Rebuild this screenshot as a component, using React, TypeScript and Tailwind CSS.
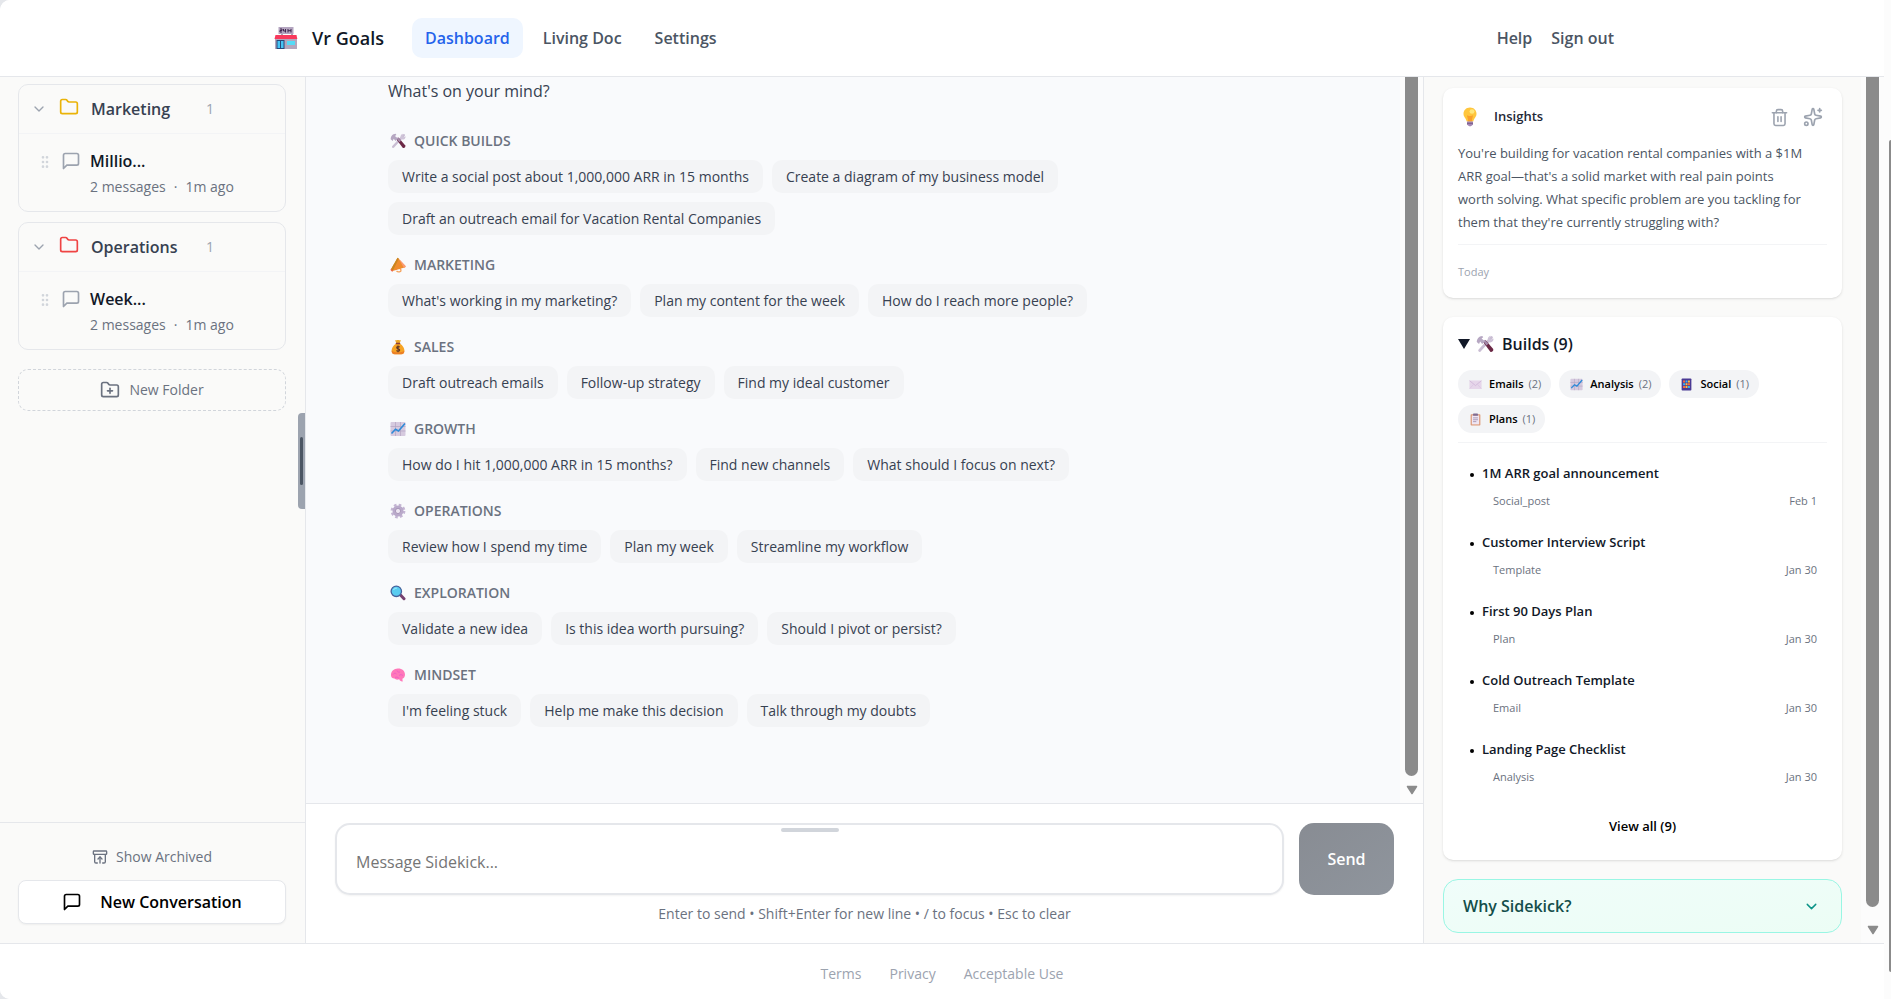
import { useState, type ReactNode } from "react";
import {
  ArchiveRestore,
  ChevronDown,
  Folder,
  FolderPlus,
  GripVertical,
  Sparkles,
  Trash2,
} from "lucide-react";

const NAV = ["Dashboard", "Living Doc", "Settings"];

const FOLDERS = [
  { name: "Marketing", color: "text-[#eab308]", chat: "Millio..." },
  { name: "Operations", color: "text-[#ef4444]", chat: "Week..." },
];

const PROMPTS = [
  {
    title: "Quick builds",
    icon: <ToolsIcon />,
    items: [
      "Write a social post about 1,000,000 ARR in 15 months",
      "Create a diagram of my business model",
      "Draft an outreach email for Vacation Rental Companies",
    ],
  },
  {
    title: "Marketing",
    icon: <MegaphoneIcon />,
    items: [
      "What's working in my marketing?",
      "Plan my content for the week",
      "How do I reach more people?",
    ],
  },
  {
    title: "Sales",
    icon: <MoneyBagIcon />,
    items: [
      "Draft outreach emails",
      "Follow-up strategy",
      "Find my ideal customer",
    ],
  },
  {
    title: "Growth",
    icon: <ChartIcon />,
    items: [
      "How do I hit 1,000,000 ARR in 15 months?",
      "Find new channels",
      "What should I focus on next?",
    ],
  },
  {
    title: "Operations",
    icon: <GearIcon />,
    items: [
      "Review how I spend my time",
      "Plan my week",
      "Streamline my workflow",
    ],
  },
  {
    title: "Exploration",
    icon: <MagnifierIcon />,
    items: [
      "Validate a new idea",
      "Is this idea worth pursuing?",
      "Should I pivot or persist?",
    ],
  },
  {
    title: "Mindset",
    icon: <BrainIcon />,
    items: [
      "I'm feeling stuck",
      "Help me make this decision",
      "Talk through my doubts",
    ],
  },
];

const FILTERS = [
  { label: "Emails", count: 2, icon: <EnvelopeIcon /> },
  { label: "Analysis", count: 2, icon: <ChartIcon /> },
  { label: "Social", count: 1, icon: <PhoneIcon /> },
  { label: "Plans", count: 1, icon: <ClipboardIcon /> },
];

const BUILDS = [
  { title: "1M ARR goal announcement", kind: "Social_post", date: "Feb 1" },
  { title: "Customer Interview Script", kind: "Template", date: "Jan 30" },
  { title: "First 90 Days Plan", kind: "Plan", date: "Jan 30" },
  { title: "Cold Outreach Template", kind: "Email", date: "Jan 30" },
  { title: "Landing Page Checklist", kind: "Analysis", date: "Jan 30" },
];

function Glyph({ children }: { children: ReactNode }) {
  return (
    <svg viewBox="0 0 16 16" className="size-full" aria-hidden="true">
      {children}
    </svg>
  );
}

function StoreIcon() {
  return (
    <svg viewBox="0 0 24 24" className="size-6 shrink-0" aria-hidden="true">
      <path d="M8 8v3M18 8v3" stroke="#5b4a66" strokeWidth="1" />
      <rect x="4.500" y="1" width="15" height="7" fill="#b4a5c0" />
      <path
        d="M6 3h2v1.500H6V6h2M9.500 3v2h2M11.500 3v3.500M14 3v3.500M17 3v3.500M14 4.700h3"
        fill="none"
        stroke="#43284f"
        strokeWidth="1"
      />
      <rect x="1" y="12" width="22" height="11" fill="#b3a6bd" />
      <path d="M1.500 9h21l.8 4H.5z" fill="#f8395c" />
      <rect x="2.500" y="14" width="8" height="9" fill="#29487a" />
      <path d="M3.500 15h2.500v7H3.500zM7 15h2.500v7H7z" fill="#45c4f5" />
      <rect x="13" y="15" width="8" height="4" fill="#55dbf7" />
    </svg>
  );
}

function ToolsIcon() {
  return (
    <Glyph>
      <path
        d="M13.800 2.200 3.200 13.800"
        stroke="#c9bdd3"
        strokeWidth="2.400"
        strokeLinecap="round"
      />
      <path
        d="M10.800 5.500c-1-2 .2-4.500 2.400-4.800L12 2.700l1.400 1.500 2.200-1c.3 2.300-2 4-4 3.200z"
        fill="#cfc3d8"
      />
      <path d="m6.500 6.500 2-2 6.800 8c.5 1.800-1 3-2.600 2.300z" fill="#6b2845" />
      <path d="M6.500 5.500 8 4.200l3 3.600-1.700 1.500z" fill="#a58cad" />
      <path
        d="M.7 6.200C.6 3.500 2.500 1 5.600.8l.8 1.200-1.500 1L8 5.500 5.500 8 3.700 5.700 2.700 8z"
        fill="#b6a7c2"
      />
    </Glyph>
  );
}

function MegaphoneIcon() {
  return (
    <Glyph>
      <path
        d="M6 12.500c1-2 4.500-2 5 .5.300 2-3 2.500-4.500 1"
        fill="none"
        stroke="#f5a35c"
        strokeWidth="1.300"
      />
      <path d="M7.500.8 15.500 9c.3 1.200-.8 1.800-1.700 1.700L2.600 14 1 12.300z" fill="#f08c2e" />
      <path d="M8.500 1.200 15.500 9c.3 1.200-.8 1.800-1.700 1.700z" fill="#fb9a74" />
      <path d="m7.500.8 1.400.8-6 12.200L1 12.300z" fill="#c9861f" />
      <path d="m1.200 12 1.900 2-1 .8-1.800-2z" fill="#ee5b3f" />
    </Glyph>
  );
}

function MoneyBagIcon() {
  return (
    <Glyph>
      <path d="M5 1c1 .8 1.800-.5 3 0 1.200-.5 2 .8 3 0l-1.300 3.300H6.300z" fill="#eda92a" />
      <path
        d="M6.300 4.500h3.400c3 1.800 5 5 4.600 8-.3 2-1.800 2.800-3.300 2.800H5c-1.500 0-3-.8-3.300-2.800-.4-3 1.600-6.200 4.600-8z"
        fill="#f6a323"
      />
      <path
        d="M1.700 11.500c2 2.500 10 2.800 12.600 0 .3 2.800-1.300 3.800-3.300 3.800H5c-2 0-3.600-1-3.300-3.800z"
        fill="#ec7f27"
      />
      <rect x="5.700" y="3.700" width="4.600" height="1.500" rx=".7" fill="#8d3d35" />
      <path
        d="M9.700 8.200C9 7.300 6.600 7.400 6.700 8.800c.1 1.300 3 .8 3 2.200 0 1.500-2.500 1.500-3.400.5M8 6.500v6.800"
        fill="none"
        stroke="#5d3426"
        strokeWidth="1.100"
      />
    </Glyph>
  );
}

function ChartIcon() {
  return (
    <Glyph>
      <rect x=".5" y="1" width="15" height="14" rx="1" fill="#d6cadf" />
      <path
        d="M5.500 1v14M10.500 1v14M.5 5.500h15M.5 10h15"
        stroke="#b3a4c1"
        strokeWidth=".7"
      />
      <path
        d="m1.500 12.500 4-4.200 3 1.700 6.500-7.500"
        fill="none"
        stroke="#2e8ad8"
        strokeWidth="1.600"
      />
    </Glyph>
  );
}

function GearIcon() {
  return (
    <Glyph>
      <circle
        cx="8"
        cy="8"
        r="6.200"
        fill="none"
        stroke="#c4b5d3"
        strokeWidth="2.400"
        strokeDasharray="2.600 2.270"
      />
      <circle cx="8" cy="8" r="4" fill="none" stroke="#b9a9ca" strokeWidth="3" />
      <circle cx="8" cy="8" r="2.600" fill="#ece4f1" stroke="#9985ab" strokeWidth=".8" />
    </Glyph>
  );
}

function MagnifierIcon() {
  return (
    <Glyph>
      <path
        d="m10.500 10 3.500 3.700"
        stroke="#75406f"
        strokeWidth="3"
        strokeLinecap="round"
      />
      <circle cx="6.300" cy="6.300" r="5.200" fill="#59ccf0" stroke="#45609b" strokeWidth="1.300" />
      <path d="M3.500 5c.6-1.400 2-2 3.300-1.800" fill="none" stroke="#a5ecff" strokeWidth="1" />
    </Glyph>
  );
}

function BrainIcon() {
  return (
    <Glyph>
      <path
        d="M1 8.500C.6 4.500 4 1.500 8 1.600c4.300 0 7.300 2.700 7 6.500-.1 2-1.300 3.200-2.600 3.700l.3 2.700c-1.700.3-2.900-.8-3.500-2.200-2 .8-3.600.5-4.800-.7C2.300 11.500 1.200 10.300 1 8.500z"
        fill="#ff78b9"
      />
      <path
        d="M3 7.500c1-1.500 2.500-1.500 3.500-.5M7 3.500c.3 1.500 1.500 2 3 1.500M9 8.500c1.500-1.300 3-1 4 .3M5 10.500c1.300-.8 2.800-.5 4 1"
        fill="none"
        stroke="#f05fc8"
        strokeWidth="1"
      />
    </Glyph>
  );
}

function EnvelopeIcon() {
  return (
    <Glyph>
      <rect x=".5" y="3" width="15" height="10.500" rx=".8" fill="#e6d6ea" />
      <path d="m.7 3.300 7.300 6 7.300-6" fill="none" stroke="#cfb5d8" strokeWidth="1" />
      <path d="m.7 13.200 5-5.500M15.300 13.200l-5-5.500" stroke="#d9c3e0" strokeWidth=".8" />
    </Glyph>
  );
}

function PhoneIcon() {
  return (
    <Glyph>
      <rect x="2" y=".5" width="12" height="15" rx="1" fill="#4b3a94" />
      <path d="M3.800 3h2.400v2.400H3.800zM9.800 6.400h2.400v2.400H9.800zM3.800 9.800h2.400v2.400H3.800z" fill="#ff6b3d" />
      <path d="M6.800 3h2.400v2.400H6.800zM3.800 6.400h2.400v2.400H3.800zM9.800 9.800h2.400v2.400H9.800z" fill="#35b4f5" />
      <path d="M9.800 3h2.400v2.400H9.800zM6.800 6.400h2.400v2.400H6.800zM6.800 9.800h2.400v2.400H6.800z" fill="#ffbd3e" />
    </Glyph>
  );
}

function ClipboardIcon() {
  return (
    <Glyph>
      <rect x="2" y="1.500" width="12" height="14" rx="1" fill="#dd9a78" />
      <rect x="3.500" y="3" width="9" height="11" fill="#efe6f3" />
      <rect x="5" y=".5" width="6" height="3" rx=".8" fill="#806b91" />
      <path d="M5 6h6M5 8.300h6M5 10.600h4" stroke="#9c8bab" strokeWidth="1" />
    </Glyph>
  );
}

function BulbIcon() {
  return (
    <svg viewBox="0 0 16 20" className="h-5 w-4" aria-hidden="true">
      <path
        d="M8 .5c4 0 6.500 3 6.500 6.300 0 3.200-2.700 4.700-3.200 7.700H4.700C4.200 11.500 1.500 10 1.500 6.800 1.500 3.500 4 .5 8 .5z"
        fill="#ffc63d"
      />
      <path d="M6 14.500c.3-3-1-4.500-1-6.500 1 1.300 5 1.300 6 0 0 2-1.300 3.500-1 6.500z" fill="#f99f2c" />
      <ellipse cx="10" cy="4.500" rx="2.500" ry="2.200" fill="#ffe77c" />
      <path d="M5 14.500h6v2.700l-1 1.300-2 1-2-1-1-1.300z" fill="#a387b3" />
      <path d="M5 16.300h6" stroke="#775a88" strokeWidth="1" />
    </svg>
  );
}

function ChatIcon() {
  return (
    <svg
      viewBox="0 0 24 24"
      fill="none"
      stroke="currentColor"
      strokeWidth="2"
      strokeLinecap="round"
      strokeLinejoin="round"
      className="size-5 shrink-0"
      aria-hidden="true"
    >
      <path d="M21 15a2 2 0 0 1-2 2H7l-4 4V5a2 2 0 0 1 2-2h14a2 2 0 0 1 2 2z" />
    </svg>
  );
}

function ScrollTrack({ gap }: { gap: string }) {
  return (
    <div
      aria-hidden="true"
      className={`flex w-[23px] shrink-0 flex-col items-center bg-[#fcfcfc] pb-2 ${gap}`}
    >
      <div className="w-[13px] flex-1 rounded-b-full bg-[#8b8b8b]" />
      <svg viewBox="0 0 12 10" className="h-[10px] w-3 shrink-0">
        <path
          d="M1.500 1.500h9L6 8.500z"
          fill="#8b8b8b"
          stroke="#8b8b8b"
          strokeWidth="1.500"
          strokeLinejoin="round"
        />
      </svg>
    </div>
  );
}

function Header() {
  return (
    <header className="border-b border-[#e5e7eb] bg-white">
      <div className="mx-auto flex h-[76px] max-w-[1344px] items-center">
        <a
          href="#"
          className="ml-1 flex items-center gap-[14px] text-lg font-semibold text-[#111827]"
        >
          <StoreIcon />
          Vr Goals
        </a>
        <nav className="ml-7 flex items-center gap-[7px]">
          {NAV.map((item, i) => (
            <a
              key={item}
              href="#"
              className={
                i === 0
                  ? "rounded-[10px] bg-[#eff6ff] px-[13px] py-2 text-base font-semibold text-[#2563eb]"
                  : "px-[13px] py-2 text-base font-semibold text-[#4b5563]"
              }
            >
              {item}
            </a>
          ))}
        </nav>
        <div className="ml-auto flex gap-[19px] text-base font-semibold text-[#4b5563]">
          <a href="#">Help</a>
          <button type="button">Sign out</button>
        </div>
      </div>
    </header>
  );
}

function Sidebar() {
  return (
    <aside className="relative flex w-[306px] shrink-0 flex-col border-r border-[#e5e7eb] bg-[#fafaf9]">
      <div className="flex flex-1 flex-col gap-[10px] pt-[7px] pr-[19px] pl-[18px]">
        {FOLDERS.map((folder) => (
          <section key={folder.name} className="rounded-[10px] border border-[#e5e7eb]">
            <button
              type="button"
              className="flex h-[49px] w-full items-center border-b border-[#f3f4f6] pl-3 text-left"
            >
              <ChevronDown className="size-4 text-[#9ca3af]" />
              <Folder className={`mb-1 ml-3 size-5 ${folder.color}`} />
              <span className="ml-3 w-[115px] text-base font-semibold text-[#374151]">
                {folder.name}
              </span>
              <span className="text-sm text-[#9ca3af]">1</span>
            </button>
            <div className="flex h-[77px] pt-[17px] pl-[18px]">
              <GripVertical className="mt-[3px] size-4 text-[#d1d5db]" />
              <span className="ml-2 text-[#9ca3af]">
                <ChatIcon />
              </span>
              <div className="ml-[9px]">
                <a href="#" className="block text-base leading-5 font-semibold text-[#111827]">
                  {folder.chat}
                </a>
                <p className="mt-[6px] flex gap-2 text-sm leading-5 text-[#6b7280]">
                  <span>2 messages</span>
                  <span>·</span>
                  <span>1m ago</span>
                </p>
              </div>
            </div>
          </section>
        ))}
        <button
          type="button"
          className="mt-[9px] flex h-[42px] items-center justify-center gap-[9px] rounded-[10px] border border-dashed border-[#d1d5db] text-sm text-[#6b7280]"
        >
          <FolderPlus className="size-5" />
          New Folder
        </button>
      </div>
      <div className="flex flex-col gap-[7px] border-t border-[#e5e7eb] pt-[18px] pr-[19px] pb-[19px] pl-[18px]">
        <button
          type="button"
          className="flex h-8 items-center justify-center gap-2 text-sm text-[#6b7280]"
        >
          <ArchiveRestore className="size-4" />
          Show Archived
        </button>
        <button
          type="button"
          className="flex h-11 items-center justify-center gap-[18px] rounded-lg border border-[#e5e7eb] bg-white text-base font-semibold text-black shadow-xs"
        >
          <ChatIcon />
          New Conversation
        </button>
      </div>
      <div
        aria-hidden="true"
        className="absolute top-[336px] right-0 flex h-24 w-[7px] items-center justify-center rounded-l-sm bg-[#9ca3af]"
      >
        <div className="h-12 w-[3px] rounded-full bg-[#4b5563]" />
      </div>
    </aside>
  );
}

function Chat() {
  const [draft, setDraft] = useState("");
  return (
    <main className="flex min-w-0 flex-1 flex-col">
      <div className="flex min-h-0 flex-1 bg-[#f9fafc]">
        <div className="min-w-0 flex-1 overflow-hidden px-[82px] pt-[2px]">
          <p className="text-base leading-6 text-[#374151]">What's on your mind?</p>
          <div className="mt-7 flex max-w-[720px] flex-col gap-5">
            {PROMPTS.map((group) => (
              <section key={group.title}>
                <h2 className="flex items-center gap-2 text-sm leading-5 font-semibold text-[#6b7280] uppercase">
                  <span className="ml-[2px] size-4">{group.icon}</span>
                  {group.title}
                </h2>
                <div className="mt-[9px] flex flex-wrap gap-[9px]">
                  {group.items.map((item) => (
                    <button
                      key={item}
                      type="button"
                      className="h-[33px] rounded-[10px] bg-[#f3f4f6] px-[14px] text-sm text-[#374151]"
                    >
                      {item}
                    </button>
                  ))}
                </div>
              </section>
            ))}
          </div>
        </div>
        <ScrollTrack gap="gap-[9px]" />
      </div>
      <form
        className="border-t border-[#e5e7eb] bg-white px-[29px] pt-[19px] pb-[19px]"
        onSubmit={(e) => e.preventDefault()}
      >
        <div className="flex gap-[15px]">
          <div className="relative flex-1">
            <textarea
              aria-label="Message Sidekick"
              placeholder="Message Sidekick..."
              value={draft}
              onChange={(e) => setDraft(e.target.value)}
              className="block h-[72px] w-full resize-none rounded-[15px] border-2 border-[#e5e7eb] bg-white px-[19px] pt-[25px] text-base leading-6 shadow-xs placeholder:text-[#757575]"
            />
            <div className="absolute top-[5px] left-1/2 h-1 w-[58px] -translate-x-1/2 rounded-full bg-[#d1d5db]" />
          </div>
          <button
            type="submit"
            className="w-[95px] rounded-[15px] bg-linear-to-br from-[#888c93] to-[#8f959d] text-base font-semibold text-white"
          >
            Send
          </button>
        </div>
        <p className="mt-[9px] text-center text-sm leading-5 text-[#6b7280]">
          Enter to send • Shift+Enter for new line • / to focus • Esc to clear
        </p>
      </form>
    </main>
  );
}

function InsightsCard() {
  return (
    <section className="rounded-[10px] bg-white px-[15px] pt-[17px] pb-4 shadow-sm">
      <div className="flex h-6 items-center">
        <span className="ml-1">
          <BulbIcon />
        </span>
        <h2 className="ml-4 text-[13px] font-semibold text-[#1f2937]">Insights</h2>
        <button
          type="button"
          aria-label="Delete insight"
          className="mr-[14px] ml-auto text-[#9ca3af]"
        >
          <Trash2 className="size-[19px]" />
        </button>
        <button type="button" aria-label="Refresh insight" className="mr-1 text-[#9ca3af]">
          <Sparkles className="size-5" />
        </button>
      </div>
      <p className="mt-[13px] border-b border-[#f3f4f6] pr-5 pb-[10px] text-[13px] leading-[23px] text-[#4b5563]">
        You're building for vacation rental companies with a $1M ARR goal—that's a solid market
        with real pain points worth solving. What specific problem are you tackling for them that
        they're currently struggling with?
      </p>
      <p className="mt-[17px] text-[11px] leading-5 text-[#9ca3af]">Today</p>
    </section>
  );
}

function BuildsCard() {
  return (
    <section className="rounded-[10px] bg-white px-[15px] pt-[15px] pb-[21px] shadow-sm">
      <button
        type="button"
        className="flex h-6 items-center text-base font-semibold text-[#111827]"
      >
        <svg viewBox="0 0 12 10" className="h-[10px] w-3" aria-hidden="true">
          <path d="M0 0h12L6 10z" fill="currentColor" />
        </svg>
        <span className="mr-2 ml-[6px] size-[18px]">
          <ToolsIcon />
        </span>
        Builds (9)
      </button>
      <div className="mt-[14px] flex flex-wrap gap-x-2 gap-y-[7px] border-b border-[#f3f4f6] pb-[9px]">
        {FILTERS.map((f) => (
          <button
            key={f.label}
            type="button"
            className="flex h-7 items-center rounded-full bg-[#f3f4f6] pr-[10px] pl-[11px] text-[11px] font-semibold text-black"
          >
            <span className="mr-[7px] size-[13px]">{f.icon}</span>
            {f.label}
            <span className="ml-[5px] font-normal text-[#6b7280]">({f.count})</span>
          </button>
        ))}
      </div>
      <ul className="mt-[18px]">
        {BUILDS.map((b) => (
          <li key={b.title} className="h-[69px] pr-[10px] pl-3">
            <a
              href="#"
              className="flex items-center gap-2 text-[13px] leading-6 font-semibold text-[#111827]"
            >
              <span className="mt-1 size-1 rounded-full bg-black" />
              {b.title}
            </a>
            <p className="mt-[6px] flex justify-between pl-[23px] text-[11px] leading-5 text-[#6b7280]">
              <span>{b.kind}</span>
              <span>{b.date}</span>
            </p>
          </li>
        ))}
      </ul>
      <button
        type="button"
        className="mt-[9px] block h-6 w-full text-[13px] font-semibold text-black"
      >
        View all (9)
      </button>
    </section>
  );
}

function Panel() {
  return (
    <aside className="flex w-[461px] shrink-0 border-l border-[#e5e7eb] bg-[#fafaf9]">
      <div className="flex min-w-0 flex-1 flex-col gap-[19px] overflow-hidden px-[19px] pt-[11px]">
        <InsightsCard />
        <BuildsCard />
        <button
          type="button"
          className="flex h-[54px] shrink-0 items-center justify-between rounded-[15px] border border-[#99f6e4] bg-linear-to-br from-[#f0fdfa] to-[#ecfdf5] pr-[21px] pl-[19px] text-base font-semibold text-[#134e4a]"
        >
          Why Sidekick?
          <ChevronDown className="size-[17px] text-[#0d9488]" />
        </button>
      </div>
      <ScrollTrack gap="gap-[18px]" />
    </aside>
  );
}

export default function App() {
  return (
    <div className="flex h-screen bg-[#e5e7eb] font-['Open_Sans','Noto_Sans',sans-serif]">
      <div className="flex min-w-0 flex-1 flex-col overflow-hidden rounded-l-[10px] bg-white">
        <Header />
        <div className="flex min-h-0 flex-1">
          <Sidebar />
          <Chat />
          <Panel />
        </div>
        <footer className="flex h-[56px] shrink-0 items-center justify-center gap-7 border-t border-[#e5e7eb] bg-white pt-1 text-sm text-[#9ca3af]">
          <a href="#">Terms</a>
          <a href="#">Privacy</a>
          <a href="#">Acceptable Use</a>
        </footer>
      </div>
      <div
        aria-hidden="true"
        className="flex w-[7px] shrink-0 justify-end bg-[#fcfcfc] pt-[140px] pb-[27px]"
      >
        <div className="w-[2px] rounded-l-full bg-[#8b8b8b]" />
      </div>
    </div>
  );
}
